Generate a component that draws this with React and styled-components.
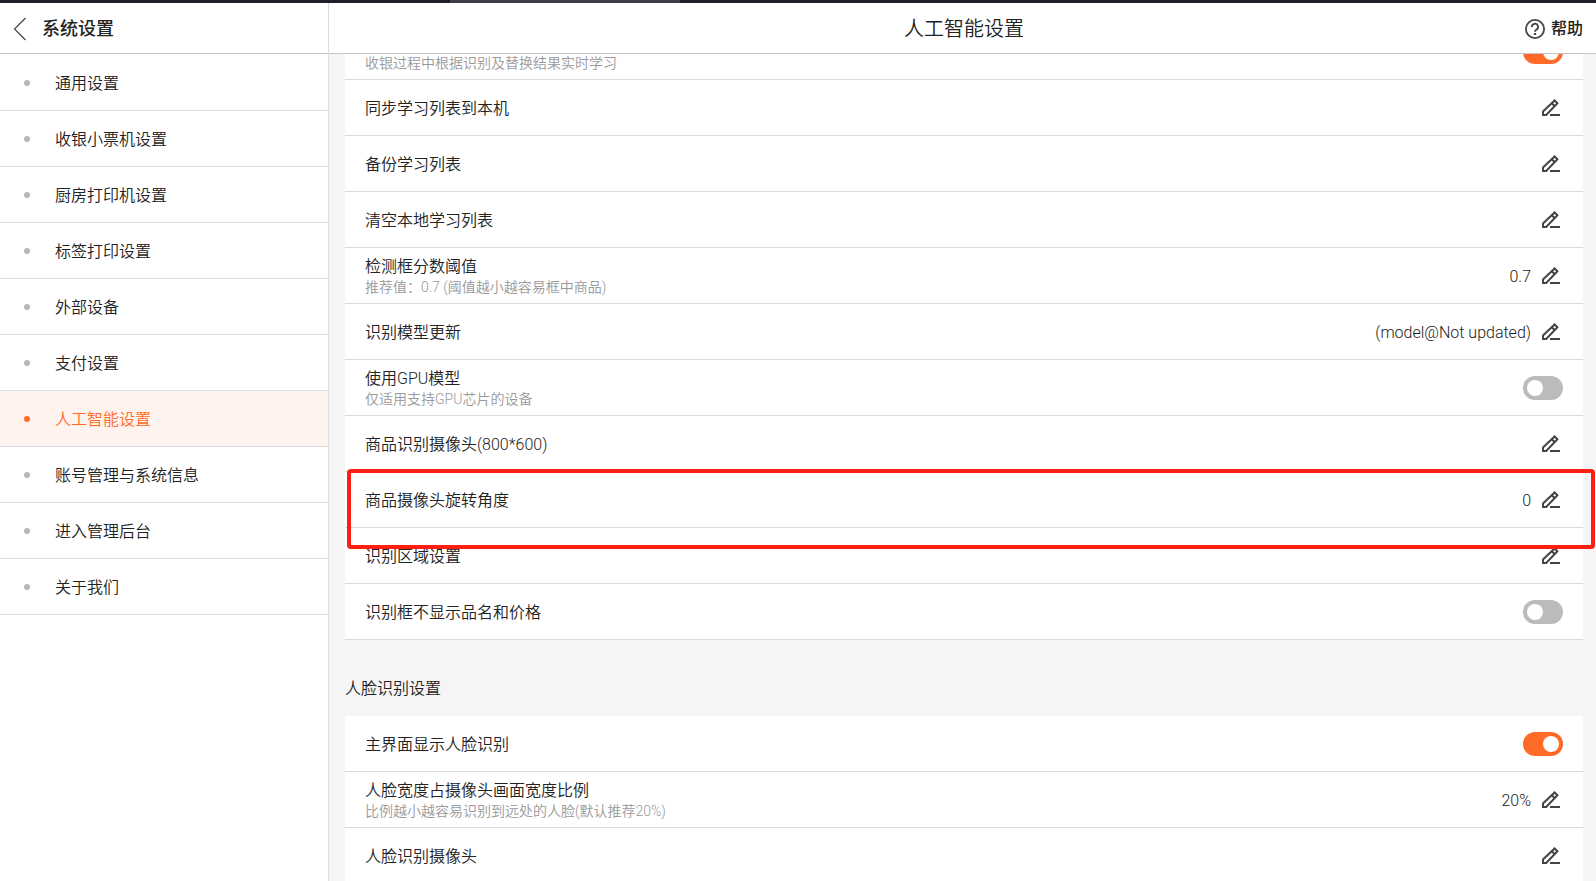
import React, { useLayoutEffect, useRef } from 'react';
import styled, { createGlobalStyle, css } from 'styled-components';

const colors = {
  accent: '#ff6a28',
  accentLight: '#fff3ef',
  text: '#222',
  muted: '#999',
  bullet: '#b8b8b8',
  line: '#dcdcdc',
  headerLine: '#c4c4c4',
  background: '#f5f5f5',
  switchOff: '#bbb',
  icon: '#444',
  mark: '#ff1e0f',
};

const menu = [
  '通用设置',
  '收银小票机设置',
  '厨房打印机设置',
  '标签打印设置',
  '外部设备',
  '支付设置',
  '人工智能设置',
  '账号管理与系统信息',
  '进入管理后台',
  '关于我们',
];

const learning = [
  { id: 'realtime', note: '收银过程中根据识别及替换结果实时学习', toggle: true, on: true },
  { id: 'sync', title: '同步学习列表到本机' },
  { id: 'backup', title: '备份学习列表' },
  { id: 'clear', title: '清空本地学习列表' },
  { id: 'threshold', title: '检测框分数阈值', note: '推荐值：0.7 (阈值越小越容易框中商品)', value: '0.7' },
  { id: 'model', title: '识别模型更新', value: '(model@Not updated)' },
  { id: 'gpu', title: '使用GPU模型', note: '仅适用支持GPU芯片的设备', toggle: true },
  { id: 'camera', title: '商品识别摄像头(800*600)' },
  { id: 'rotation', title: '商品摄像头旋转角度', value: '0', marked: true },
  { id: 'region', title: '识别区域设置' },
  { id: 'hide-name', title: '识别框不显示品名和价格', toggle: true },
];

const face = [
  { id: 'face-show', title: '主界面显示人脸识别', toggle: true, on: true },
  { id: 'face-width', title: '人脸宽度占摄像头画面宽度比例', note: '比例越小越容易识别到远处的人脸(默认推荐20%)', value: '20%' },
  { id: 'face-camera', title: '人脸识别摄像头' },
];

const GlobalStyle = createGlobalStyle`
  * {
    box-sizing: border-box;
  }

  body {
    margin: 0;
    color: ${colors.text};
    font-family: Roboto, 'Noto Sans CJK SC', sans-serif;
    font-size: 16px;
    font-weight: 350;
    line-height: 24px;
  }

  button {
    padding: 0;
    border: 0;
    background: none;
    color: inherit;
    font: inherit;
    cursor: pointer;
  }
`;

const Page = styled.div`
  display: flex;
  flex-direction: column;
  height: 100vh;
  background: #fff;
`;

const WindowEdge = styled.div`
  flex: none;
  height: 3px;
  padding-left: 450px;
  background: #1f1f28;
`;

const WindowTab = styled.div`
  width: 230px;
  height: 3px;
  background: #403c49;
`;

const Columns = styled.div`
  display: grid;
  grid-template-columns: 329px minmax(0, 1fr);
  flex: 1;
  min-height: 0;
`;

const Sidebar = styled.aside`
  border-right: 1px solid ${colors.line};
`;

const Main = styled.main`
  display: flex;
  flex-direction: column;
  min-width: 0;
  min-height: 0;
`;

const headerBar = css`
  align-items: center;
  flex: none;
  height: 51px;
  border-bottom: 1px solid ${colors.headerLine};
`;

const SidebarHeader = styled.header`
  ${headerBar}
  display: flex;
  gap: 15px;
  padding: 1px 13px 0;
`;

const SidebarTitle = styled.h2`
  margin: 0;
  font-size: 18px;
  font-weight: 500;
`;

const MainHeader = styled.header`
  ${headerBar}
  display: grid;
  grid-template-columns: 1fr auto 1fr;
  padding: 1px 13px 0 16px;
`;

const MainTitle = styled.h1`
  grid-column: 2;
  margin: 0;
  font-size: 20px;
  font-weight: 350;
`;

const IconButton = styled.button`
  display: flex;
  color: ${colors.icon};
`;

const HelpButton = styled.button`
  display: flex;
  align-items: center;
  justify-self: end;
  gap: 6px;
  font-weight: 500;

  svg {
    color: ${colors.icon};
  }
`;

const MenuList = styled.ul`
  margin: 0;
  padding: 1px 0 0;
  list-style: none;
`;

const MenuLink = styled.a`
  display: flex;
  align-items: center;
  gap: 25px;
  height: 56px;
  padding: 1px 24px 0;
  border-bottom: 1px solid ${colors.line};
  background: ${({ $active }) => ($active ? colors.accentLight : 'transparent')};
  color: ${({ $active }) => ($active ? colors.accent : 'inherit')};
  line-height: 25px;
  text-decoration: none;

  &::before {
    content: '';
    width: 6px;
    height: 6px;
    border-radius: 50%;
    background: ${({ $active }) => ($active ? colors.accent : colors.bullet)};
  }
`;

const Scroller = styled.div`
  flex: 1;
  min-height: 0;
  padding: 0 13px 16px 16px;
  overflow-y: auto;
  scrollbar-width: none;
  background: ${colors.background};
`;

const Card = styled.div`
  background: #fff;
`;

const SectionTitle = styled.h3`
  margin: 37px 0 15px;
  font-size: 16px;
  font-weight: 350;
`;

const Row = styled.div`
  position: relative;
  display: flex;
  align-items: center;
  justify-content: space-between;
  height: 56px;
  padding: 0 20px;
  border-bottom: 1px solid ${colors.line};
`;

const RowText = styled.div`
  display: flex;
  flex-direction: column;
  justify-content: flex-end;
  min-height: ${({ $tall }) => ($tall ? '40px' : '24px')};
`;

const RowLabel = styled.label`
  line-height: 22px;
`;

const RowNote = styled.span`
  color: ${colors.muted};
  font-size: 14px;
  line-height: 18px;
`;

const RowAction = styled.div`
  display: flex;
  align-items: center;
  gap: 8px;
`;

const RowValue = styled.span`
  padding-top: 2px;
`;

const Switch = styled.input`
  appearance: none;
  width: 40px;
  height: 24px;
  margin: 0;
  padding: 4px;
  border-radius: 12px;
  background: ${colors.switchOff};
  cursor: pointer;

  &::before {
    content: '';
    display: block;
    width: 16px;
    height: 16px;
    border-radius: 50%;
    background: #fff;
  }

  &:checked {
    background: ${colors.accent};
  }

  &:checked::before {
    margin-left: auto;
  }
`;

const Marker = styled.div`
  position: absolute;
  z-index: 1;
  top: -3px;
  right: -12px;
  left: 2px;
  height: 80px;
  border: 4px solid ${colors.mark};
  border-radius: 4px;
  pointer-events: none;
`;

const BackIcon = () => (
  <svg width="14" height="24" viewBox="0 0 14 24" fill="none" stroke="currentColor" strokeWidth="1.2" aria-hidden="true">
    <path d="M12.5 1 L1.5 12 L12.5 23" />
  </svg>
);

const HelpIcon = () => (
  <svg width="20" height="20" viewBox="0 0 20 20" fill="none" stroke="currentColor" strokeWidth="1.8" aria-hidden="true">
    <circle cx="10" cy="10" r="9.1" />
    <path d="M6.9 8 A3.1 3.1 0 1 1 11.4 10.6 Q10 11.3 10 12.8" />
    <path d="M10 14 V16" strokeWidth="2.2" />
  </svg>
);

const PencilIcon = () => (
  <svg width="24" height="24" viewBox="0 0 24 24" fill="none" stroke="currentColor" strokeWidth="2" aria-hidden="true">
    <path d="M4 19 V15.4 L15.6 4.5 L18.4 7.3 L7.2 19 Z" />
    <path d="M12.8 7.2 L15.6 10" />
    <path d="M11 19 H21" />
  </svg>
);

const SettingRow = ({ id, title, note, value, toggle, on, marked }) => (
  <Row>
    <RowText $tall={Boolean(note)}>
      {title && <RowLabel htmlFor={id}>{title}</RowLabel>}
      {note && (
        <RowNote as={title ? 'span' : 'label'} htmlFor={title ? undefined : id}>
          {note}
        </RowNote>
      )}
    </RowText>
    <RowAction>
      {value && <RowValue>{value}</RowValue>}
      {toggle ? (
        <Switch id={id} type="checkbox" role="switch" defaultChecked={on} />
      ) : (
        <IconButton id={id} type="button">
          <PencilIcon />
        </IconButton>
      )}
    </RowAction>
    {marked && <Marker />}
  </Row>
);

const App = () => {
  const scroller = useRef(null);

  // the list opens a little way down
  useLayoutEffect(() => {
    scroller.current.scrollTop = 30;
  }, []);

  return (
    <>
      <GlobalStyle />
      <Page>
        <WindowEdge>
          <WindowTab />
        </WindowEdge>
        <Columns>
          <Sidebar>
            <SidebarHeader>
              <IconButton type="button" aria-label="返回">
                <BackIcon />
              </IconButton>
              <SidebarTitle>系统设置</SidebarTitle>
            </SidebarHeader>
            <nav>
              <MenuList>
                {menu.map(name => (
                  <li key={name}>
                    <MenuLink href="#" $active={name === '人工智能设置'}>
                      {name}
                    </MenuLink>
                  </li>
                ))}
              </MenuList>
            </nav>
          </Sidebar>
          <Main>
            <MainHeader>
              <MainTitle>人工智能设置</MainTitle>
              <HelpButton type="button">
                <HelpIcon />
                帮助
              </HelpButton>
            </MainHeader>
            <Scroller ref={scroller}>
              <Card>
                {learning.map(item => <SettingRow key={item.id} {...item} />)}
              </Card>
              <SectionTitle>人脸识别设置</SectionTitle>
              <Card>
                {face.map(item => <SettingRow key={item.id} {...item} />)}
              </Card>
            </Scroller>
          </Main>
        </Columns>
      </Page>
    </>
  );
};

export default App;
